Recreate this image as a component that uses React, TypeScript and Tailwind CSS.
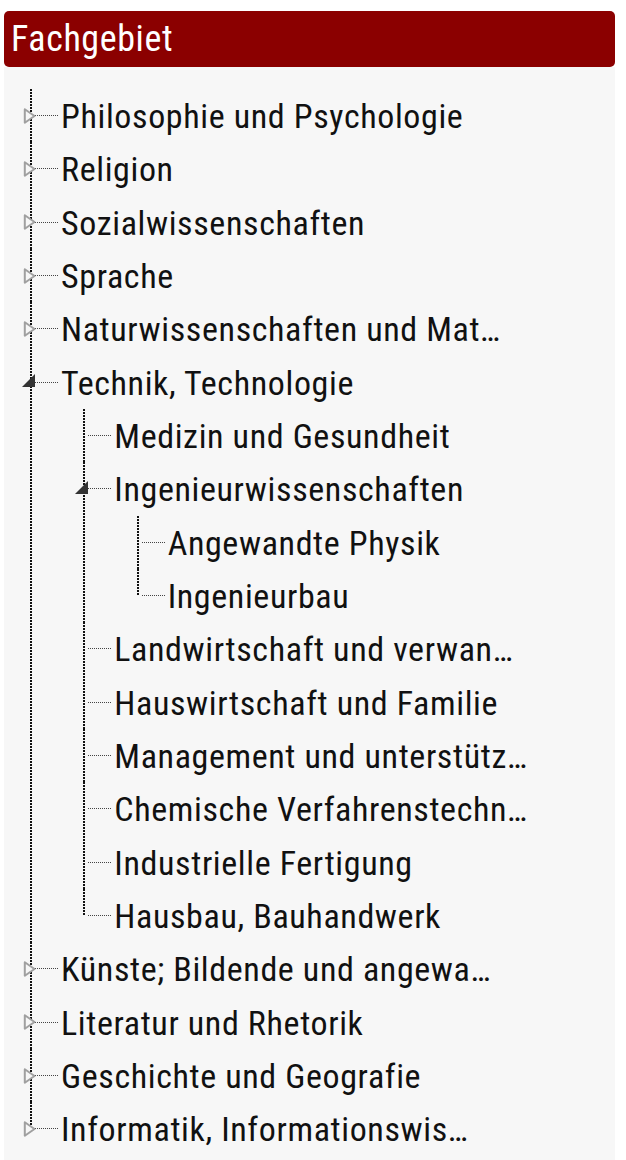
import React from "react";

type Node = { label: string; open?: boolean; children?: Node[] };

const tree: Node[] = [
  { label: "Philosophie und Psychologie", children: [] },
  { label: "Religion", children: [] },
  { label: "Sozialwissenschaften", children: [] },
  { label: "Sprache", children: [] },
  { label: "Naturwissenschaften und Mat…", children: [] },
  {
    label: "Technik, Technologie",
    open: true,
    children: [
      { label: "Medizin und Gesundheit" },
      {
        label: "Ingenieurwissenschaften",
        open: true,
        children: [{ label: "Angewandte Physik" }, { label: "Ingenieurbau" }],
      },
      { label: "Landwirtschaft und verwan…" },
      { label: "Hauswirtschaft und Familie" },
      { label: "Management und unterstütz…" },
      { label: "Chemische Verfahrenstechn…" },
      { label: "Industrielle Fertigung" },
      { label: "Hausbau, Bauhandwerk" },
    ],
  },
  { label: "Künste; Bildende und angewa…", children: [] },
  { label: "Literatur und Rhetorik", children: [] },
  { label: "Geschichte und Geografie", children: [] },
  { label: "Informatik, Informationswis…", children: [] },
];

function Collapsed() {
  return (
    <svg width="14" height="17" viewBox="0 0 14 17" className="absolute left-[-7px] top-1/2 -translate-y-1/2">
      <path d="M1.8 1.8 L11.5 8.5 L1.8 15.2 Z" fill="#f7f7f7" stroke="#a0a0a0" strokeWidth="2" strokeLinejoin="round" />
    </svg>
  );
}

function Expanded() {
  return (
    <svg width="14" height="14" viewBox="0 0 14 14" className="absolute left-[-8px] top-[calc(50%-9px)]">
      <path d="M0 14 L13 1 L13 14 Z" fill="#333" />
    </svg>
  );
}

function Item({ node, last }: { node: Node; last: boolean }) {
  const hasKids = node.children !== undefined;
  return (
    <li className="relative">
      <div
        className={
          "absolute left-0 top-0 w-[2px] bg-[repeating-linear-gradient(to_bottom,#111_0_2px,transparent_2px_3px)] " +
          (last ? "h-[26.67px]" : "h-full")
        }
      />
      <div className="relative flex h-[53.33px] items-center">
        <div className="absolute left-[5px] top-[calc(50%-0.5px)] h-[1px] w-[23px] bg-[repeating-linear-gradient(to_right,#444_0_1px,transparent_1px_2px)]" />
        {hasKids && (node.open ? <Expanded /> : <Collapsed />)}
        <span className="pl-[31px] pt-[1px] whitespace-nowrap text-[34px] leading-none tracking-[0.62px] text-[#111] [font-stretch:condensed]">
          {node.label}
        </span>
      </div>
      {node.open && node.children && node.children.length > 0 && (
        <ul className="pl-[53.33px]">
          {node.children.map((c, i) => (
            <Item key={c.label} node={c} last={i === node.children!.length - 1} />
          ))}
        </ul>
      )}
    </li>
  );
}

export default function App() {
  return (
    <div className="min-h-[1160px] bg-white pt-[11px] font-['Roboto',sans-serif]">
      <div className="mx-[4px] w-[611px]">
        <div className="flex h-[56px] items-center rounded-[5px] bg-[#8b0000] pl-[7px]">
          <span className="text-[36px] leading-none tracking-[0.6px] text-white [font-stretch:condensed]">Fachgebiet</span>
        </div>
        <div className="min-h-[1093px] bg-[#f7f7f7] pt-[22px] pl-[26px]">
          <ul>
            {tree.map((n, i) => (
              <Item key={n.label} node={n} last={i === tree.length - 1} />
            ))}
          </ul>
        </div>
      </div>
    </div>
  );
}
